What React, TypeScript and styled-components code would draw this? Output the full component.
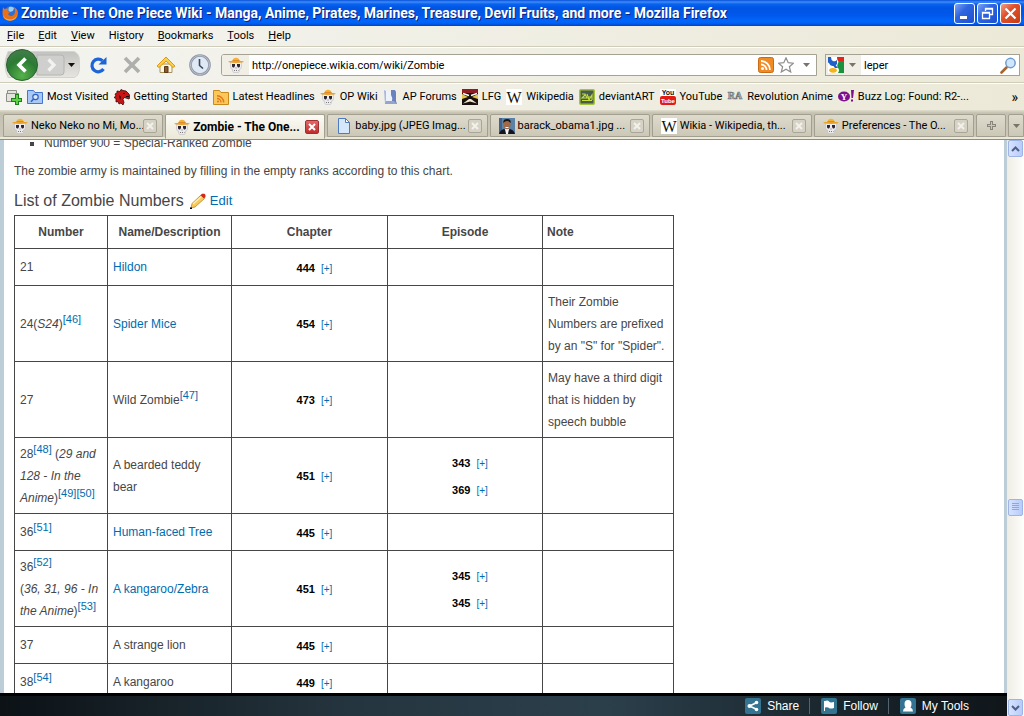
import React from "react";
import styled, { createGlobalStyle, css } from "styled-components";

const ui = `Roboto, "Noto Sans", sans-serif`;

const Global = createGlobalStyle`
  * { box-sizing: border-box; }
  html, body { margin: 0; padding: 0; }
  body { background: #fff; overflow: hidden; }
  button, input { font: inherit; color: inherit; margin: 0; padding: 0; border: 0; background: none; outline: 0; border-radius: 0; }
  svg { display: block; flex: none; }
`;

const Window = styled.div`
  display: flex;
  flex-direction: column;
  height: 100vh;
  min-width: 0;
  font: 11px/16px ${ui};
  color: #000;
  background: #ece9d8;
`;

/* ---------- title bar ---------- */
const TitleBar = styled.header`
  display: flex;
  align-items: center;
  gap: 3px;
  flex: none;
  height: 26px;
  padding: 0 3px 0 2px;
  background: linear-gradient(#0a4fd8 0, #3c8cf8 2px, #0a63ee 4px, #0054e3 8px, #0058ea 15px, #0066fc 21px, #0062f5 23px, #0043c8 26px);
`;
const WindowTitle = styled.h1`
  flex: 1;
  min-width: 0;
  margin: 0;
  overflow: hidden;
  white-space: nowrap;
  font: bold 14px/20px Roboto, sans-serif;
  color: #fff;
  text-shadow: 1px 1px 0 #0a1f7a;
`;
const WindowButtons = styled.div`
  display: flex;
  gap: 2px;
`;
const WindowButton = styled.button<{ $danger?: boolean }>`
  display: grid;
  place-items: center;
  width: 21px;
  height: 21px;
  border: 1px solid #fff;
  border-radius: 3px;
  background: ${(p) =>
    p.$danger
      ? "linear-gradient(135deg, #f0a088, #e0512b 40%, #c83c12)"
      : "linear-gradient(135deg, #7fa4f4, #2f66e0 40%, #1d4fd0)"};
`;

/* ---------- menu bar ---------- */
const chrome = css`
  background: linear-gradient(90deg, #f4f4f0, #ece9d8);
`;
const MenuBar = styled.nav`
  display: flex;
  flex: none;
  gap: 14px;
  height: 21px;
  padding: 2px 7px 3px;
  ${chrome}
  border-bottom: 1px solid #d0ccba;
`;
const MenuButton = styled.button`
  line-height: 16px;
`;

/* ---------- navigation ---------- */
const NavBar = styled.div`
  display: flex;
  align-items: center;
  flex: none;
  height: 36px;
  padding: 0 4px 0 3px;
  ${chrome}
  border-top: 1px solid #fff;
  border-bottom: 1px solid #d0ccba;
`;
const IconButton = styled.button`
  display: grid;
  place-items: center;
  flex: none;
  width: 34px;
  height: 32px;
`;
const BackForward = styled.div`
  display: flex;
  align-items: center;
  flex: none;
  width: 78px;
  height: 32px;
`;
const NavIcons = styled.div`
  display: flex;
  flex: none;
  width: 140px;
`;
const Field = styled.label<{ $grow?: boolean }>`
  display: flex;
  align-items: center;
  flex: ${(p) => (p.$grow ? "1 1 0" : "0 1 195px")};
  min-width: 0;
  height: 22px;
  margin-right: ${(p) => (p.$grow ? "8px" : "0")};
  padding-right: 2px;
  border: 1px solid #a5a193;
  border-radius: ${(p) => (p.$grow ? "3px 0 0 3px" : "0")};
  background: #fff;
  overflow: hidden;
`;
const FieldBadge = styled.span`
  display: flex;
  align-items: center;
  justify-content: center;
  flex: none;
  align-self: stretch;
  min-width: 27px;
  padding: 0 1px 0 2px;
  background: #f1efe5;
`;
const FieldInput = styled.input`
  flex: 1;
  min-width: 0;
  height: 18px;
  padding-left: 3px;
`;
const FieldActions = styled.span`
  display: flex;
  align-items: center;
  gap: 4px;
  flex: none;
`;
const PlainButton = styled.button`
  display: grid;
  place-items: center;
  flex: none;
  min-width: 16px;
  height: 18px;
`;

/* ---------- bookmarks ---------- */
const BookmarkBar = styled.nav`
  display: flex;
  align-items: center;
  flex: none;
  gap: 5px;
  height: 27px;
  padding: 0 6px;
  ${chrome}
  border-top: 1px solid #fff;
`;
const Bookmark = styled.a`
  display: flex;
  align-items: center;
  gap: 4px;
  flex: none;
  white-space: nowrap;
  color: #000;
  text-decoration: none;
`;
const More = styled.button`
  margin-left: auto;
  font-size: 14px;
`;

/* ---------- tabs ---------- */
const TabBar = styled.div`
  display: flex;
  align-items: flex-end;
  flex: none;
  gap: 2px;
  height: 30px;
  padding: 0 0 0 3px;
  background: linear-gradient(#e2decd 0, #c4c1b1 3px, #cbc8b9 26px, #aca899 26px, #ece9d8 27px, #ece9d8 29px, #8f8b7d 29px);
`;
const tabFace = css<{ $active?: boolean }>`
  height: ${(p) => (p.$active ? "25px" : "23px")};
  margin-bottom: ${(p) => (p.$active ? "1px" : "3px")};
  border: 1px solid #a29f90;
  border-bottom-color: ${(p) => (p.$active ? "#ece9d8" : "#a29f90")};
  border-radius: 2px 2px 0 0;
  background: ${(p) => (p.$active ? "linear-gradient(#fbfaf6, #ece9d8)" : "linear-gradient(#dedbcd, #cbc8b8)")};
`;
const Tab = styled.div<{ $active?: boolean }>`
  display: flex;
  align-items: center;
  flex: 1 1 0;
  min-width: 0;
  padding: 0 5px 0 8px;
  ${tabFace}
`;
const TabButton = styled.button<{ $active?: boolean }>`
  display: flex;
  align-items: center;
  gap: 3px;
  flex: 1;
  min-width: 0;
  white-space: nowrap;
  font-weight: ${(p) => (p.$active ? "bold" : "normal")};
  font-size: ${(p) => (p.$active ? "12px" : "11px")};
`;
const TabLabel = styled.span`
  flex: 1;
  min-width: 0;
  text-align: left;
`;
const CloseButton = styled.button<{ $active?: boolean }>`
  display: grid;
  place-items: center;
  flex: none;
  width: 14px;
  height: 14px;
  border: 1px solid ${(p) => (p.$active ? "#a03030" : "#a9a698")};
  border-radius: 2px;
  background: ${(p) => (p.$active ? "linear-gradient(#e06a6a, #c02c2c)" : "#d6d3c6")};
`;
const TabAction = styled.button<{ $width: number }>`
  display: grid;
  place-items: center;
  flex: none;
  width: ${(p) => p.$width}px;
  ${tabFace}
`;

/* ---------- viewport ---------- */
const Viewport = styled.div`
  display: flex;
  flex: 1;
  min-height: 0;
`;
const Page = styled.div`
  display: flex;
  flex-direction: column;
  flex: 1;
  min-width: 0;
  background: #fff;
`;
const Article = styled.main`
  flex: 1;
  min-height: 0;
  overflow: hidden;
  padding: 0 10px;
  border: solid #bccdd8;
  border-width: 0 3px 0 4px;
  font: 12px/22px "Liberation Sans", Arial, sans-serif;
  color: #474646;
`;
const Ranks = styled.ul`
  margin: -8px 0 0;
  padding: 0 0 0 30px;
  list-style: square;
`;
const Paragraph = styled.p`
  margin: 6px 0 8px;
`;
const Heading = styled.h3`
  display: flex;
  align-items: center;
  gap: 6px;
  margin: 0 0 3px;
  font-weight: normal;
  font-size: 16px;
  line-height: 22px;
`;
const EditLink = styled.a`
  display: flex;
  align-items: center;
  gap: 4px;
  font-size: 13px;
  color: #006cb0;
  text-decoration: none;
`;
const Table = styled.table`
  width: 660px;
  table-layout: fixed;
  border-collapse: collapse;
`;
const HeadCell = styled.th<{ $left?: boolean }>`
  height: 33px;
  padding: 0 4px;
  border: 1px solid #474646;
  text-align: ${(p) => (p.$left ? "left" : "center")};
`;
const Row = styled.tr<{ $lines: number }>`
  height: ${(p) => (p.$lines > 1 ? 76 : 37)}px;
`;
const Cell = styled.td<{ $issue?: boolean }>`
  padding: ${(p) => (p.$issue ? "2px 0 0 10px" : "0 5px")};
  border: 1px solid #474646;
  white-space: nowrap;
  text-align: ${(p) => (p.$issue ? "center" : "left")};
`;
const Col = styled.col<{ $w: number }>`
  width: ${(p) => p.$w}px;
`;
const WikiLink = styled.a`
  color: #006cb0;
  text-decoration: none;
`;
const Sup = styled.sup`
  font-size: 11px;
  line-height: 0;
`;
const Issue = styled.div`
  font-weight: bold;
  font-size: 11px;
  line-height: 27px;
  color: #000;
`;
const Expand = styled.a`
  margin-left: 3px;
  font-weight: normal;
  font-size: 10px;
  color: #006cb0;
  text-decoration: none;
`;

/* ---------- wiki toolbar ---------- */
const ToolBar = styled.footer`
  display: flex;
  align-items: center;
  justify-content: flex-end;
  flex: none;
  height: 23px;
  padding: 0 38px 0 0;
  background: linear-gradient(90deg, #0c1216, #25353f 35%, #2b3f4b 60%, #151e24 90%, #10161a);
  border-top: 3px solid #000;
  font: 12px/16px "Liberation Sans", Arial, sans-serif;
  color: #fff;
`;
const Tool = styled.a`
  display: flex;
  align-items: center;
  gap: 6px;
  padding: 0 0 0 11px;
  margin-left: 10px;
  color: #fff;
  text-decoration: none;
  & + & { border-left: 1px solid #54646e; }
`;

/* ---------- scroll bar ---------- */
const ScrollBar = styled.div`
  display: flex;
  flex-direction: column;
  align-items: center;
  flex: none;
  width: 17px;
  background: linear-gradient(90deg, #eeede5, #fefefb);
`;
const ScrollButton = styled.button`
  display: grid;
  place-items: center;
  flex: none;
  width: 15px;
  height: 17px;
  border: 1px solid #9eb4e4;
  border-radius: 2px;
  background: linear-gradient(90deg, #d6e2ff, #b8ccfb);
`;
const Track = styled.div<{ $grow: number }>`
  flex: ${(p) => p.$grow} 1 0;
`;

/* ---------- pictures ---------- */
const Pic = ({ size = 16, children }: { size?: number; children: React.ReactNode }) => (
  <svg width={size} height={size} viewBox="0 0 16 16" aria-hidden="true">{children}</svg>
);
const Skull = () => (
  <Pic>
    <path d="M2.500 5h11v5l-1 2h-1v2l-1 1.500h-5l-1-1.500v-2h-1l-1-2z" fill="#ececef" stroke="#bdbcc4" strokeWidth=".6" />
    <path d="M4.500 3.500Q5 .8 8 .8t3.500 2.700v1h-7z" fill="#f2b233" />
    <path d="M4.500 3.200h7v1h-7z" fill="#d9772a" />
    <ellipse cx="8" cy="4.800" rx="7.700" ry="1.100" fill="#e9a227" />
    <path d="M4 7h3v2L6 10.500H5L4 9.500zM9 7h3v2.500l-1 1h-1L9 9z" fill="#2e2530" />
    <path d="M7.500 10.500h1v1h-1zM6 13h1v1H6zM8 13h1v1H8zM10 13h.5v1H10z" fill="#777" />
  </Pic>
);
const Firefox = () => (
  <Pic>
    <circle cx="8.500" cy="7.500" r="6.500" fill="#2f6fd0" />
    <path d="M7 2q3-1 5 1l-1 3-3 1-2-2z" fill="#9ad0f5" />
    <path d="M1 2q1 2 2 2 2-1 4 0L5.500 6 8 7 6 9q1 2.500 4 2 3-1 3-5 0-2-1-4 4 2 4 6 0 7.500-8 7.500Q.500 15.500.500 8.500.500 5 1 2z" fill="#e8701a" />
    <path d="M1 9q1 5 7 5.500 5 0 7-5-1 6-7 6.200Q2 15.500 1 9z" fill="#f9b233" />
  </Pic>
);
const Feed = ({ fill = "#f08a24" }: { fill?: string }) => (
  <Pic>
    <rect x=".5" y=".5" width="15" height="15" rx="2" fill={fill} stroke="#c96a14" />
    <circle cx="4.500" cy="11.500" r="1.500" fill="#fff" />
    <path d="M3 7.500A5.500 5.500 0 0 1 8.500 13M3 4A9 9 0 0 1 12 13" fill="none" stroke="#fff" strokeWidth="1.800" />
  </Pic>
);
const FeedFolder = () => (
  <Pic>
    <path d="M.5 1.500h6l1.500 2h7.500v12H.5z" fill="#fbc75a" stroke="#c98a1c" />
    <circle cx="5" cy="12.500" r="1" fill="#e8701a" />
    <path d="M4 9.500a4 4 0 0 1 4 4M4 6.800a6.700 6.700 0 0 1 6.700 6.700" fill="none" stroke="#e07818" strokeWidth="1.400" />
  </Pic>
);
const Folder = () => (
  <Pic>
    <path d="M.5 1.500h6l1.500 2h7.500v11H.5z" fill="#a9c8f6" stroke="#4377cf" />
    <circle cx="8.500" cy="8" r="2.700" fill="#dceafd" stroke="#2f62c0" strokeWidth="1.200" />
    <path d="M6.500 10L4 12.800" stroke="#2f62c0" strokeWidth="1.600" />
  </Pic>
);
const NewTabPic = () => (
  <Pic>
    <path d="M1.500 4.500v-3h9v3M.500 4.500h12v8H.500z" fill="#e4e4de" stroke="#8f8f8a" />
    <path d="M9 5h4v4h3v4h-3v3H9v-3H5V9h4z" fill="#1c7f1a" />
    <path d="M10 6h2v4h3v2h-3v3h-2v-3H6v-2h4z" fill="#62cf48" />
  </Pic>
);
const Dino = () => (
  <Pic>
    <path d="M1 5l2-1V2l3 .5L7 .5l2 1 3 .5 3 3 1 3-1 2-3-1-2-.5-1 2 1 3-1 2.500-2-2-2 1-1-2.500-2 .5V9.500L0 8.500l2-1.500z" fill="#c81414" stroke="#3a0505" strokeWidth=".8" />
    <path d="M9 4h2v1H9zM12 7h3v1h-3zM5 6l2 2-1 3z" fill="#1a0202" />
  </Pic>
);
const Forum = () => (
  <Pic>
    <path d="M1 1l3 1q4 0 5 3l1 6-7 2z" fill="#eef2fb" />
    <path d="M1 1l2 1v9l-1 4z" fill="#a9b9dc" />
    <path d="M8 1h4l1 2v9l1 3H2l1-3h6q1-3-1-6z" fill="#6a82be" />
    <path d="M3 12h8l3 3H2z" fill="#93a5cf" />
  </Pic>
);
const Mask = () => (
  <Pic>
    <path d="M0 0h16v16H0z" fill="#17100f" />
    <path d="M0 0h16v4H0z" fill="#8c1d24" />
    <path d="M0 5l6 3-6 2zM16 5l-6 3 6 2z" fill="#e9c64a" />
    <path d="M1 14.500L7 10h2l6 4.500-7-2z" fill="#f1e9d0" />
    <path d="M1 4.500l6 2M15 4.500L9 6.500" stroke="#fff" strokeWidth="1.400" />
  </Pic>
);
const WikiW = () => (
  <Pic>
    <path d="M0 0h16v16H0z" fill="#fff" />
    <text x="8" y="13.500" textAnchor="middle" fontFamily="Liberation Serif, serif" fontSize="16" fill="#111">W</text>
  </Pic>
);
const Deviant = () => (
  <Pic>
    <rect x=".75" y=".75" width="14.500" height="14.500" rx="1" fill="#475c4d" stroke="#a8c43a" strokeWidth="1.500" />
    <path d="M3 5h3l2 4H3l3-3M8 5l2 6 3-5v5M3 11.500h10M9 8h4" fill="none" stroke="#c5df3c" strokeWidth="1.100" />
  </Pic>
);
const YouTube = () => (
  <Pic>
    <path d="M0 0h16v16H0z" fill="#fff" />
    <rect y="7" width="16" height="9" rx="2" fill="#e21b14" />
    <text x="8" y="6" textAnchor="middle" fontFamily="Liberation Sans, sans-serif" fontWeight="bold" fontSize="7" fill="#111">You</text>
    <text x="8" y="14" textAnchor="middle" fontFamily="Liberation Sans, sans-serif" fontWeight="bold" fontSize="6" fill="#fff">Tube</text>
  </Pic>
);
const RevAnime = () => (
  <Pic>
    <text x="8" y="10" textAnchor="middle" fontFamily="Liberation Serif, serif" fontWeight="bold" fontSize="10" fill="#b9bfc2" stroke="#6d777c" strokeWidth=".7">RA</text>
  </Pic>
);
const Yahoo = () => (
  <Pic>
    <ellipse cx="6" cy="7.500" rx="6" ry="5" fill="#7b0f8d" />
    <text x="6" y="10.500" textAnchor="middle" fontFamily="Liberation Serif, serif" fontWeight="bold" fontSize="9" fill="#fff">Y</text>
    <path d="M13 1h3l-1 8h-1.500zM13 10.500h2v2h-2z" fill="#7b0f8d" />
  </Pic>
);
const FilePic = () => (
  <Pic>
    <path d="M2.500.500h7l4 4v11h-11z" fill="#d6e6fb" stroke="#4c7dc4" />
    <path d="M9.500.500v4h4z" fill="#fff" stroke="#4c7dc4" />
  </Pic>
);
const Portrait = () => (
  <Pic>
    <path d="M0 0h16v16H0z" fill="#5b82a6" />
    <path d="M0 0h3v16H0z" fill="#44618a" />
    <path d="M0 16q1-4 5-5l3 2 3-2q4 1 5 5z" fill="#14161f" />
    <path d="M6 11h4l-1 5H7z" fill="#f4f4f4" />
    <ellipse cx="8" cy="6.500" rx="3.500" ry="4.800" fill="#a06a48" />
    <path d="M4.300 5Q4 1 8 1t3.700 4Q10 3 8 3T4.300 5z" fill="#1b1412" />
    <path d="M6.500 9h3v1h-3z" fill="#fff" />
  </Pic>
);
const Google = () => (
  <Pic>
    <path d="M0 0h16v16H0z" fill="#fff" />
    <path d="M9 0h7v5h-5q-2-1-2-5z" fill="#e3241d" />
    <path d="M11 4h5v12h-6q2-3 0-5t1-7z" fill="#18933c" />
    <path d="M0 0h3q0 3 2 4t4-1v4q-1 2-4 2T1 6l-1-.5z" fill="#1f5fc7" />
    <path d="M4.500 8h3l2.500 3H7z" fill="#1f5fc7" />
    <ellipse cx="5" cy="13.300" rx="3.800" ry="2.400" fill="#f5b31a" />
  </Pic>
);
const Down = () => (
  <svg width="7" height="4" viewBox="0 0 7 4" aria-hidden="true"><path d="M0 0h7L3.500 4z" fill="#77746a" /></svg>
);
const Cross = ({ color }: { color: string }) => (
  <svg width="8" height="8" viewBox="0 0 8 8" aria-hidden="true"><path d="M1 1l6 6M7 1L1 7" stroke={color} strokeWidth="2" /></svg>
);

const BackForwardPic = () => (
  <svg width="78" height="32" viewBox="0 0 78 32" aria-hidden="true">
    <defs>
      <radialGradient id="green" cx="50%" cy="85%" r="85%">
        <stop offset="0" stopColor="#55b24a" /><stop offset=".6" stopColor="#2c7a34" /><stop offset="1" stopColor="#447f4c" />
      </radialGradient>
      <linearGradient id="pill" x1="0" x2="0" y1="0" y2="1">
        <stop offset="0" stopColor="#c2c2c0" /><stop offset="1" stopColor="#e6e5e0" />
      </linearGradient>
    </defs>
    <path d="M5 2.500h66q5 2 5.500 8v10q-.5 6-5 8H5q-6-12 0-26z" fill="url(#pill)" stroke="#d4d3ce" />
    <path d="M34 6h24q3 0 3 3v14q0 3-3 3H34z" fill="#cfcfcd" stroke="#b4b4b2" />
    <circle cx="19" cy="16" r="15.500" fill="url(#green)" stroke="#2c6333" />
    <path d="M22.500 9.500L16 16l6.500 6.500" fill="none" stroke="#fff" strokeWidth="3.600" />
    <path d="M45.500 10.500L51 16l-5.500 5.500" fill="none" stroke="#f2f2f2" strokeWidth="3.200" />
    <path d="M65 14h7l-3.500 4z" fill="#111" />
  </svg>
);
const BackForwardButton = styled.button`
  display: block;
`;

type BookmarkItem = { label: string; icon: React.ReactNode };
const bookmarks: BookmarkItem[] = [
  { label: "Most Visited", icon: <Folder /> },
  { label: "Getting Started", icon: <Dino /> },
  { label: "Latest Headlines", icon: <FeedFolder /> },
  { label: "OP Wiki", icon: <Skull /> },
  { label: "AP Forums", icon: <Forum /> },
  { label: "LFG", icon: <Mask /> },
  { label: "Wikipedia", icon: <WikiW /> },
  { label: "deviantART", icon: <Deviant /> },
  { label: "YouTube", icon: <YouTube /> },
  { label: "Revolution Anime", icon: <RevAnime /> },
  { label: "Buzz Log: Found: R2-...", icon: <Yahoo /> },
];

const tabs = [
  { label: "Neko Neko no Mi, Mo...", icon: <Skull /> },
  { label: "Zombie - The One...", icon: <Skull />, active: true },
  { label: "baby.jpg (JPEG Imag...", icon: <FilePic /> },
  { label: "barack_obama1.jpg ...", icon: <Portrait /> },
  { label: "Wikia - Wikipedia, th...", icon: <WikiW /> },
  { label: "Preferences - The O...", icon: <Skull /> },
];

const menus: [string, string, string][] = [
  ["", "F", "ile"], ["", "E", "dit"], ["", "V", "iew"], ["Hi", "s", "tory"],
  ["", "B", "ookmarks"], ["", "T", "ools"], ["", "H", "elp"],
];

const Ref = ({ n }: { n: number }) => (
  <Sup><WikiLink href={`#note-${n}`}>[{n}]</WikiLink></Sup>
);

type Zombie = {
  lines: number;
  number: React.ReactNode;
  name: React.ReactNode;
  chapter: number;
  episodes?: number[];
  note?: React.ReactNode;
};
const zombies: Zombie[] = [
  { lines: 1, number: "21", name: <WikiLink href="#hildon">Hildon</WikiLink>, chapter: 444 },
  {
    lines: 3, number: <>24(<i>S24</i>)<Ref n={46} /></>, name: <WikiLink href="#mice">Spider Mice</WikiLink>, chapter: 454,
    note: <>Their Zombie<br />Numbers are prefixed<br />by an "S" for "Spider".</>,
  },
  {
    lines: 3, number: "27", name: <>Wild Zombie<Ref n={47} /></>, chapter: 473,
    note: <>May have a third digit<br />that is hidden by<br />speech bubble</>,
  },
  {
    lines: 3,
    number: <>28<Ref n={48} /> (<i>29 and<br />128 - In the<br />Anime</i>)<Ref n={49} /><Ref n={50} /></>,
    name: <>A bearded teddy<br />bear</>, chapter: 451, episodes: [343, 369],
  },
  { lines: 1, number: <>36<Ref n={51} /></>, name: <WikiLink href="#tree">Human-faced Tree</WikiLink>, chapter: 445 },
  {
    lines: 3,
    number: <>36<Ref n={52} /><br />(<i>36, 31, 96 - In<br />the Anime</i>)<Ref n={53} /></>,
    name: <WikiLink href="#kangaroo">A kangaroo/Zebra</WikiLink>, chapter: 451, episodes: [345, 345],
  },
  { lines: 1, number: "37", name: "A strange lion", chapter: 445 },
  { lines: 1, number: <>38<Ref n={54} /></>, name: "A kangaroo", chapter: 449 },
];

const IssueLine = ({ n }: { n: number }) => (
  <Issue>{n} <Expand href={`#issue-${n}`}>[+]</Expand></Issue>
);

export default function App() {
  return (
    <Window>
      <Global />
      <TitleBar>
        <Firefox />
        <WindowTitle>Zombie - The One Piece Wiki - Manga, Anime, Pirates, Marines, Treasure, Devil Fruits, and more - Mozilla Firefox</WindowTitle>
        <WindowButtons>
          <WindowButton aria-label="Minimize">
            <svg width="13" height="13" viewBox="0 0 13 13"><path d="M2 9h7v3H2z" fill="#fff" /></svg>
          </WindowButton>
          <WindowButton aria-label="Restore">
            <svg width="13" height="13" viewBox="0 0 13 13"><path d="M4.500 4V1.500h7v6H9M4 2h8M1.500 5.500h7v6h-7zM1 6h8" fill="none" stroke="#fff" strokeWidth="1.300" /></svg>
          </WindowButton>
          <WindowButton $danger aria-label="Close">
            <svg width="13" height="13" viewBox="0 0 13 13"><path d="M1.500 1.500l10 10M11.500 1.500l-10 10" stroke="#fff" strokeWidth="2.200" /></svg>
          </WindowButton>
        </WindowButtons>
      </TitleBar>

      <MenuBar>
        {menus.map(([before, key, after]) => (
          <MenuButton key={key}>{before}<u>{key}</u>{after}</MenuButton>
        ))}
      </MenuBar>

      <NavBar>
        <BackForward>
          <BackForwardButton aria-label="Back and forward"><BackForwardPic /></BackForwardButton>
        </BackForward>
        <NavIcons>
          <IconButton aria-label="Reload">
            <svg width="18" height="18" viewBox="0 0 18 18">
              <path d="M14.500 13A6.300 6.300 0 1 1 13.500 4.800" fill="none" stroke="#1d64d8" strokeWidth="3.200" />
              <path d="M17.500 1v7.500H9.500z" fill="#1d64d8" />
            </svg>
          </IconButton>
          <IconButton aria-label="Stop">
            <svg width="18" height="18" viewBox="0 0 18 18"><path d="M2 2l14 14M16 2L2 16" stroke="#aeaeac" strokeWidth="3.600" /></svg>
          </IconButton>
          <IconButton aria-label="Home">
            <svg width="20" height="18" viewBox="0 0 20 18">
              <path d="M4 8h12v8.500H4z" fill="#fdf6e2" stroke="#a8905c" />
              <path d="M8.500 10.500h3.500v6H8.500z" fill="#8a5a2a" stroke="#5d3a16" />
              <path d="M10 1L1 10l2 1.500 7-6.500 7 6.500 2-1.500z" fill="#fccf4a" stroke="#dc9716" />
            </svg>
          </IconButton>
          <IconButton aria-label="History">
            <svg width="22" height="22" viewBox="0 0 22 22">
              <circle cx="11" cy="11" r="9.500" fill="#dfe9f5" stroke="#8d96a4" strokeWidth="2.600" />
              <circle cx="11" cy="11" r="9.500" fill="none" stroke="#c6ccd6" strokeWidth=".8" />
              <path d="M10.500 5v6.500l3.500 3" fill="none" stroke="#39465c" strokeWidth="1.600" />
            </svg>
          </IconButton>
        </NavIcons>
        <Field $grow>
          <FieldBadge><Skull /></FieldBadge>
          <FieldInput aria-label="Address" defaultValue="http://onepiece.wikia.com/wiki/Zombie" />
          <FieldActions>
            <PlainButton aria-label="Subscribe"><Feed /></PlainButton>
            <PlainButton aria-label="Bookmark this page">
              <svg width="16" height="16" viewBox="0 0 16 16"><path d="M8 .8l2.200 4.900 5.200.5-4 3.500 1.300 5.300L8 12.200 3.300 15l1.300-5.300-4-3.500 5.200-.5z" fill="#fff" stroke="#8e8e8c" strokeWidth="1.200" /></svg>
            </PlainButton>
            <PlainButton aria-label="Show history"><Down /></PlainButton>
          </FieldActions>
        </Field>
        <Field>
          <FieldBadge><Google /><PlainButton as="span"><Down /></PlainButton></FieldBadge>
          <FieldInput aria-label="Search" defaultValue="leper" />
          <PlainButton aria-label="Search">
            <svg width="17" height="17" viewBox="0 0 17 17">
              <path d="M6.500 10.500L1.500 15.500" stroke="#a8642c" strokeWidth="2.600" strokeLinecap="round" />
              <circle cx="10.500" cy="6" r="4.700" fill="#cfe6fb" stroke="#6f9cd0" strokeWidth="1.500" />
            </svg>
          </PlainButton>
        </Field>
      </NavBar>

      <BookmarkBar>
        <PlainButton aria-label="New tab"><NewTabPic /></PlainButton>
        {bookmarks.map((b) => (
          <Bookmark key={b.label} href="#bookmark">{b.icon}{b.label}</Bookmark>
        ))}
        <More aria-label="More bookmarks">»</More>
      </BookmarkBar>

      <TabBar>
        {tabs.map((t) => (
          <Tab key={t.label} $active={t.active}>
            <TabButton $active={t.active}>{t.icon}<TabLabel>{t.label}</TabLabel></TabButton>
            <CloseButton $active={t.active} aria-label="Close tab"><Cross color={t.active ? "#fff" : "#f2f1ea"} /></CloseButton>
          </Tab>
        ))}
        <TabAction $width={30} aria-label="Open a new tab">
          <svg width="9" height="9" viewBox="0 0 9 9"><path d="M3 0h3v3h3v3H6v3H3V6H0V3h3z" fill="#88867a" /><path d="M4 1h1v3h3v1H5v3H4V5H1V4h3z" fill="#c9c7bb" /></svg>
        </TabAction>
        <TabAction $width={16} aria-label="List all tabs"><Down /></TabAction>
      </TabBar>

      <Viewport>
        <Page>
          <Article>
            <Ranks><li>Number 900 = Special-Ranked Zombie</li></Ranks>
            <Paragraph>The zombie army is maintained by filling in the empty ranks according to this chart.</Paragraph>
            <Heading>
              List of Zombie Numbers
              <EditLink href="#edit">
                <svg width="16" height="16" viewBox="0 0 16 16">
                  <path d="M1 15l1-4.500L11 2l3.500 3.500L5 14z" fill="#f9c95c" stroke="#b8862b" strokeWidth=".8" />
                  <path d="M3 11l8.500-7.500" stroke="#fdeeb4" strokeWidth="1.400" />
                  <path d="M10.500 2.200L12 .8h2.500l1 1.200v2L14 5.500z" fill="#d3261c" />
                  <path d="M0 14.500h2V16H0z" fill="#000" />
                </svg>
                Edit
              </EditLink>
            </Heading>
            <Table>
              <colgroup><Col $w={93} /><Col $w={124} /><Col $w={156} /><Col $w={155} /><Col $w={131} /></colgroup>
              <thead>
                <tr>
                  <HeadCell>Number</HeadCell>
                  <HeadCell>Name/Description</HeadCell>
                  <HeadCell>Chapter</HeadCell>
                  <HeadCell>Episode</HeadCell>
                  <HeadCell $left>Note</HeadCell>
                </tr>
              </thead>
              <tbody>
                {zombies.map((z, i) => (
                  <Row key={i} $lines={z.lines}>
                    <Cell>{z.number}</Cell>
                    <Cell>{z.name}</Cell>
                    <Cell $issue><IssueLine n={z.chapter} /></Cell>
                    <Cell $issue>{z.episodes?.map((n, k) => <IssueLine key={k} n={n} />)}</Cell>
                    <Cell>{z.note}</Cell>
                  </Row>
                ))}
              </tbody>
            </Table>
          </Article>
          <ToolBar>
            <Tool href="#share">
              <Pic>
                <rect width="16" height="16" rx="2" fill="#347491" />
                <path d="M12 4.500L4.500 8l7.500 3.500" fill="none" stroke="#fff" strokeWidth="1.600" />
                <circle cx="11.500" cy="4.500" r="1.800" fill="#fff" /><circle cx="4.500" cy="8" r="2" fill="#fff" /><circle cx="11.500" cy="11.500" r="1.800" fill="#fff" />
              </Pic>
              Share
            </Tool>
            <Tool href="#follow">
              <Pic>
                <rect width="16" height="16" rx="2" fill="#347491" />
                <path d="M3 3h1v10H3zM4 3q3-1 4 .5t5 .5v6q-4 1-5 0T4 9.500z" fill="#fff" />
              </Pic>
              Follow
            </Tool>
            <Tool href="#tools">
              <Pic>
                <rect width="16" height="16" rx="2" fill="#347491" />
                <path d="M8 2q3.500 0 3.500 4 0 2-1 3.500 2.500 1 2.500 4H3q0-3 2.500-4-1-1.500-1-3.500Q4.500 2 8 2z" fill="#fff" />
              </Pic>
              My Tools
            </Tool>
          </ToolBar>
        </Page>
        <ScrollBar>
          <ScrollButton aria-label="Scroll up">
            <svg width="9" height="6" viewBox="0 0 9 6"><path d="M1 5l3.500-3.500L8 5" fill="none" stroke="#4d6185" strokeWidth="2" /></svg>
          </ScrollButton>
          <Track $grow={340} />
          <ScrollButton aria-label="Scroll position">
            <svg width="7" height="8" viewBox="0 0 7 8"><path d="M0 .5h7M0 2.500h7M0 4.500h7M0 6.500h7" stroke="#8ba7ec" /></svg>
          </ScrollButton>
          <Track $grow={182} />
          <ScrollButton aria-label="Scroll down">
            <svg width="9" height="6" viewBox="0 0 9 6"><path d="M1 1l3.500 3.500L8 1" fill="none" stroke="#4d6185" strokeWidth="2" /></svg>
          </ScrollButton>
        </ScrollBar>
      </Viewport>
    </Window>
  );
}
